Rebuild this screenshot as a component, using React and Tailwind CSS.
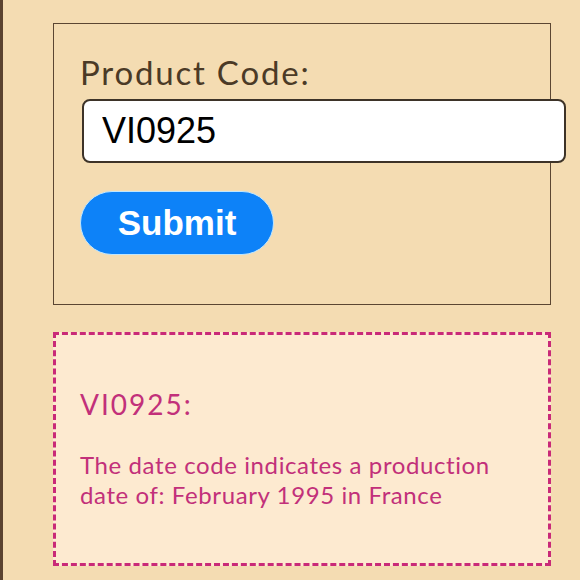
export default function App() {
  return (
    <div className="w-[580px] h-[580px] overflow-hidden bg-[#f4dcb2] border-l-[3px] border-[#5b4330] pl-[50px] pt-[23px] font-['Lato',sans-serif]">
      <form
        className="w-[498px] h-[282px] border-[1.5px] border-[#5b4632] pl-[26px] pt-[28px]"
        onSubmit={(e) => e.preventDefault()}
      >
        <label className="block text-[33px] leading-[40px] tracking-[1.8px] text-[#4b3a26]">Product Code:</label>
        <input
          defaultValue="VI0925"
          className="mt-[7px] ml-[2px] w-[484px] h-[64px] bg-white border-2 border-[#3d3328] rounded-[8px] px-[18px] text-[36px] text-black font-['Liberation_Sans',Arial,sans-serif] outline-none"
        />
        <button
          type="submit"
          className="mt-[28px] block w-[194px] h-[64px] rounded-full bg-[#0d82f8] border border-[#bfe6ff] text-white text-[35px] font-bold font-['Liberation_Sans',Arial,sans-serif]"
        >
          Submit
        </button>
      </form>
      <div className="mt-[27px] w-[498px] h-[234px] border-[3px] border-dashed border-[#c92a78] bg-[#fdead0] pl-[24px] pr-[40px] pt-[51px] text-[#c2307a]">
        <h3 className="text-[28px] leading-[36px] tracking-[2px]">VI0925:</h3>
        <p className="mt-[28px] text-[24px] leading-[30px] tracking-[0.6px]">
          The date code indicates a production date of: February 1995 in France
        </p>
      </div>
    </div>
  );
}
